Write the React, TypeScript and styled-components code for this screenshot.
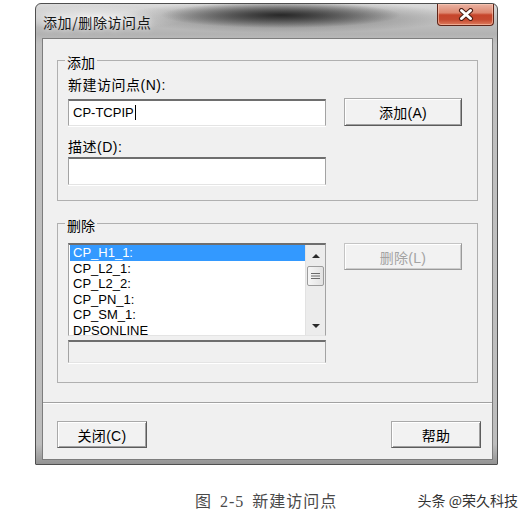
import React from "react";
import styled, { createGlobalStyle } from "styled-components";

const Global = createGlobalStyle`
  html, body { margin: 0; padding: 0; background: #ffffff; }
  body {
    width: 529px; height: 518px; overflow: hidden;
    font-family: "Liberation Sans", "Noto Sans CJK SC", sans-serif;
    color: #000;
  }
  * { box-sizing: border-box; }
`;

const Page = styled.div`
  width: 529px;
  height: 518px;
  padding-top: 3px;
  display: flex;
  flex-direction: column;
`;

const Window = styled.div`
  margin-left: 35px;
  width: 463px;
  height: 462px;
  border: 1px solid #4f4f4f;
  border-radius: 6px 6px 1px 1px;
  padding: 0 4px 4px 6px;
  display: flex;
  flex-direction: column;
  background:
    radial-gradient(ellipse 120px 13px at 245px 11px, rgba(30,30,30,0.9), rgba(30,30,30,0) 100%),
    radial-gradient(ellipse 170px 16px at 250px 13px, rgba(70,70,70,0.6), rgba(70,70,70,0) 100%),
    radial-gradient(ellipse 90px 12px at 60px 14px, rgba(255,255,255,0.7), rgba(255,255,255,0) 100%),
    linear-gradient(180deg, #dcdcdc 0px, #c4c4c4 14px, #b2b2b2 30px, #c0c0c0 40px, #bdbdbd 440px, #8f8f8f 462px);
`;

const TitleBar = styled.div`
  height: 34px;
  display: flex;
  align-items: flex-start;
  justify-content: space-between;
  padding-left: 1px;
`;

const Title = styled.div`
  margin-top: 8px;
  font-family: "Noto Sans CJK SC", sans-serif;
  font-size: 14px;
  line-height: 20px;
  letter-spacing: 0.6px;
  color: #161616;
  text-shadow: 0 0 6px rgba(255,255,255,0.9);
`;

const CloseButton = styled.div`
  width: 57px;
  height: 22px;
  margin-right: -1px;
  border: 1px solid #5e2418;
  border-top: none;
  border-radius: 0 0 4px 4px;
  display: flex;
  align-items: center;
  justify-content: center;
  background: linear-gradient(180deg, #eab3a3 0%, #dd8870 42%, #c6452b 52%, #c64a30 75%, #de7d5e 100%);
  box-shadow: inset 0 0 0 1px rgba(255,210,190,0.55);
`;

const Client = styled.div`
  height: 422px;
  border: 1px solid #7d7d7d;
  background: #f0f0f0;
  padding: 11px 0;
  display: flex;
  flex-direction: column;
`;

const GroupBox = styled.fieldset<{ $gap?: number }>`
  margin: ${(p) => p.$gap ?? 0}px 14px 0;
  padding: 0;
  border: 1px solid #b0b0b0;
  min-width: 0;
`;

const Legend = styled.legend`
  margin-left: 7px;
  padding: 4px 2px 0;
  font-size: 14px;
  line-height: 16px;
  font-family: "Noto Sans CJK SC", sans-serif;
`;

const FormGrid = styled.div<{ $pt: number; $pb: number }>`
  display: grid;
  grid-template-columns: 258px 118px;
  column-gap: 18px;
  align-items: start;
  padding: ${(p) => p.$pt}px 0 ${(p) => p.$pb}px 10px;
`;

const FieldLabel = styled.div<{ $mt?: number }>`
  grid-column: 1;
  margin-top: ${(p) => p.$mt ?? 0}px;
  height: 18px;
  font-size: 14px;
  line-height: 18px;
  letter-spacing: 0.5px;
`;

const Sunken = styled.div<{ $mt?: number; $h: number; $bg?: string }>`
  grid-column: 1;
  margin-top: ${(p) => p.$mt ?? 0}px;
  height: ${(p) => p.$h}px;
  background: ${(p) => p.$bg ?? "#ffffff"};
  border-style: solid;
  border-width: 2px 1px 1px 1px;
  border-color: #6e6e6e #a3a3a3 #e4e4e4 #a3a3a3;
  box-shadow: 0 1px 0 #fff;
`;

const InputText = styled.div`
  padding-left: 4px;
  font-size: 13px;
  line-height: 23px;
  display: flex;
  align-items: center;
`;

const Caret = styled.span`
  display: inline-block;
  width: 1px;
  height: 15px;
  background: #000;
  margin-left: 1px;
`;

const Button = styled.div<{ $row?: number; $mt?: number; $h?: number; $disabled?: boolean }>`
  grid-column: 2;
  grid-row: ${(p) => p.$row ?? "auto"};
  margin-top: ${(p) => p.$mt ?? 0}px;
  width: ${(p) => (p.$row ? "118px" : "90px")};
  height: ${(p) => p.$h ?? 27}px;
  display: flex;
  align-items: center;
  justify-content: center;
  font-size: 14px;
  letter-spacing: 0.3px;
  color: ${(p) => (p.$disabled ? "#a3a3a3" : "#000")};
  background: #f2f2f2;
  border: 1px solid;
  border-color: ${(p) =>
    p.$disabled ? "#c4c4c4 #9a9a9a #9a9a9a #c4c4c4" : "#a9a9a9 #5c5c5c #5c5c5c #a9a9a9"};
  box-shadow: inset 1px 1px 0 #ffffff, inset -1px -1px 0 ${(p) => (p.$disabled ? "#cdcdcd" : "#a0a0a0")};
`;

const ListBox = styled.div`
  grid-column: 1;
  grid-row: 1;
  height: 93px;
  display: flex;
  background: #fff;
  border-style: solid;
  border-width: 2px 1px 1px 1px;
  border-color: #6e6e6e #a3a3a3 #e4e4e4 #a3a3a3;
  padding-left: 1px;
  overflow: hidden;
`;

const Items = styled.div`
  flex: 1;
  overflow: hidden;
`;

const Item = styled.div<{ $selected?: boolean }>`
  height: 15.5px;
  padding-left: 3px;
  font-size: 13px;
  line-height: 16px;
  white-space: nowrap;
  background: ${(p) => (p.$selected ? "#3399ff" : "transparent")};
  color: ${(p) => (p.$selected ? "#ffffff" : "#000000")};
`;

const ScrollBar = styled.div`
  width: 20px;
  display: flex;
  flex-direction: column;
  align-items: center;
  background: #ececec;
  border-left: 1px solid #e2e2e2;
`;

const ArrowBox = styled.div<{ $h: number }>`
  height: ${(p) => p.$h}px;
  width: 100%;
  display: flex;
  align-items: center;
  justify-content: center;
`;

const Thumb = styled.div`
  width: 17px;
  height: 20px;
  border: 1px solid #9c9c9c;
  border-radius: 2px;
  background: linear-gradient(90deg, #f6f6f6, #e2e2e2);
  display: flex;
  align-items: center;
  justify-content: center;
`;

const Track = styled.div`
  flex: 1;
`;

const Separator = styled.div`
  margin-top: 19px;
  height: 2px;
  border-top: 1px solid #a2a2a2;
  border-bottom: 1px solid #ffffff;
`;

const ButtonRow = styled.div`
  margin-top: 17px;
  display: flex;
  justify-content: space-between;
  padding: 0 11px 0 14px;
`;

const CaptionRow = styled.div`
  margin-top: 26px;
  display: flex;
  align-items: center;
  height: 18px;
  padding-left: 195px;
`;

const Caption = styled.div`
  font-family: "Liberation Serif", "Noto Sans CJK SC", serif;
  font-size: 16px;
  letter-spacing: 1px;
  word-spacing: 3px;
  color: #4a4a4a;
  white-space: nowrap;
`;

const Watermark = styled.div`
  margin-left: auto;
  margin-right: 11px;
  font-family: "Noto Sans CJK SC", sans-serif;
  font-size: 14px;
  color: #333;
  white-space: nowrap;
`;

const CloseGlyph = () => (
  <svg width="16" height="13" viewBox="0 0 16 13">
    <path d="M3.5 2.5 L12.5 10.5 M12.5 2.5 L3.5 10.5" stroke="#4a1c12" strokeWidth="5" strokeLinecap="round" />
    <path d="M3.5 2.5 L12.5 10.5 M12.5 2.5 L3.5 10.5" stroke="#ffffff" strokeWidth="3" strokeLinecap="round" />
  </svg>
);

const UpArrow = () => (
  <svg width="8" height="5" viewBox="0 0 8 5">
    <path d="M0 5 L4 1 L8 5 Z" fill="#2a2a2a" />
  </svg>
);

const DownArrow = () => (
  <svg width="8" height="5" viewBox="0 0 8 5">
    <path d="M0 0 L8 0 L4 4 Z" fill="#2a2a2a" />
  </svg>
);

const Grip = () => (
  <svg width="9" height="8" viewBox="0 0 9 8">
    <path d="M0 1.5 H9 M0 4 H9 M0 6.5 H9" stroke="#6a6a6a" strokeWidth="1" />
  </svg>
);

const items = ["CP_H1_1:", "CP_L2_1:", "CP_L2_2:", "CP_PN_1:", "CP_SM_1:", "DPSONLINE"];

export default function App() {
  return (
    <>
      <Global />
      <Page>
        <Window>
          <TitleBar>
            <Title>添加/删除访问点</Title>
            <CloseButton>
              <CloseGlyph />
            </CloseButton>
          </TitleBar>
          <Client>
            <GroupBox>
              <Legend>添加</Legend>
              <FormGrid $pt={6} $pb={15}>
                <FieldLabel>新建访问点(N):</FieldLabel>
                <Sunken $mt={5} $h={27}>
                  <InputText>
                    CP-TCPIP
                    <Caret />
                  </InputText>
                </Sunken>
                <Button $row={2} $mt={4} $h={28}>添加(A)</Button>
                <FieldLabel $mt={12}>描述(D):</FieldLabel>
                <Sunken $mt={1} $h={28} />
              </FormGrid>
            </GroupBox>
            <GroupBox $gap={12}>
              <Legend>删除</Legend>
              <FormGrid $pt={10} $pb={19}>
                <ListBox>
                  <Items>
                    {items.map((it, i) => (
                      <Item key={it} $selected={i === 0}>
                        {it}
                      </Item>
                    ))}
                  </Items>
                  <ScrollBar>
                    <ArrowBox $h={21}>
                      <UpArrow />
                    </ArrowBox>
                    <Thumb>
                      <Grip />
                    </Thumb>
                    <Track />
                    <ArrowBox $h={18}>
                      <DownArrow />
                    </ArrowBox>
                  </ScrollBar>
                </ListBox>
                <Button $row={1} $h={27} $disabled>
                  删除(L)
                </Button>
                <Sunken $mt={4} $h={23} $bg="#f0f0f0" />
              </FormGrid>
            </GroupBox>
            <Separator />
            <ButtonRow>
              <Button>关闭(C)</Button>
              <Button>帮助</Button>
            </ButtonRow>
          </Client>
        </Window>
        <CaptionRow>
          <Caption>图 2-5 新建访问点</Caption>
          <Watermark>头条 @荣久科技</Watermark>
        </CaptionRow>
      </Page>
    </>
  );
}
